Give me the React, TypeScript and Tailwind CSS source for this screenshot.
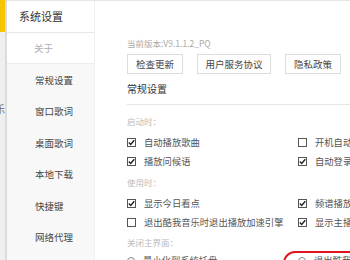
import React from 'react';

const FONT = "font-['Microsoft_YaHei','Noto_Sans_CJK_SC',sans-serif]";

const Check: React.FC<{ on?: boolean }> = ({ on }) => (
  <span className="w-[9px] h-[9px] border border-[#555] bg-white flex items-center justify-center shrink-0">
    {on && (
      <svg width="7" height="7" viewBox="0 0 7 7">
        <path d="M0.8 3.6 L2.7 5.5 L6.3 1.2" fill="none" stroke="#222" strokeWidth="1.4" />
      </svg>
    )}
  </span>
);

const Radio: React.FC = () => (
  <span className="w-[8px] h-[8px] rounded-full border border-[#888] bg-white shrink-0" />
);

const Option: React.FC<{ on?: boolean; label: string; radio?: boolean }> = ({ on, label, radio }) => (
  <div className="flex items-center gap-[8px] h-[19px] whitespace-nowrap">
    {radio ? <Radio /> : <Check on={on} />}
    <span className="text-[9.3px] text-[#555]">{label}</span>
  </div>
);

const SECTIONS = ['常规设置', '窗口歌词', '桌面歌词', '本地下载', '快捷键', '网络代理'];

const App: React.FC = () => {
  return (
    <div className={`w-[350px] h-[260px] overflow-hidden flex bg-white relative ${FONT}`}>
      {/* app behind the dialog */}
      <div className="w-[7px] flex flex-col shrink-0 border-r-2 border-[#dcdcdc] overflow-hidden">
        <div className="h-[32px] bg-[#f6c400]" />
        <div className="flex-1 bg-[#efefef] pt-[72px]">
          <span className="block -ml-[5px] text-[10px] text-[#666] leading-none">乐</span>
        </div>
      </div>

      <div className="flex-1 flex border-t border-[#e6e6e6]">
        {/* sidebar */}
        <div className="w-[88px] shrink-0 bg-[#f8f8f8] flex flex-col border-r border-[#f0f0f0]">
          <div className="h-[32px] bg-white flex items-center pl-[12px] border-b border-[#e8e8e8]">
            <span className="text-[11px] text-[#333]">系统设置</span>
          </div>
          <div className="h-[31px] bg-white flex items-center pl-[27px] border-b border-[#ececec]">
            <span className="text-[9.5px] text-[#b0b0b0]">关于</span>
          </div>
          {SECTIONS.map(s => (
            <div key={s} className="h-[31.5px] flex items-center pl-[28px]">
              <span className="text-[9.5px] text-[#444]">{s}</span>
            </div>
          ))}
        </div>

        {/* content */}
        <div className="flex-1 pl-[32px] pt-[36px]">
          <div className="text-[8.5px] leading-[12px] text-[#aaa]">当前版本:V9.1.1.2_PQ</div>
          <div className="flex gap-[14px] mt-[5px]">
            <button className="w-[56px] h-[20px] border border-[#ddd] text-[9.5px] text-[#444]">检查更新</button>
            <button className="w-[74px] h-[20px] border border-[#ddd] text-[9.5px] text-[#444]">用户服务协议</button>
            <button className="w-[56px] h-[20px] border border-[#ddd] text-[9.5px] text-[#444]">隐私政策</button>
          </div>
          <div className="mt-[8px] pb-[8px] border-b border-[#e6e6e6] text-[10px] leading-[14px] text-[#333]">常规设置</div>

          <div className="mt-[10px] text-[8.5px] leading-[12px] text-[#bbb]">启动时：</div>
          <div className="grid grid-cols-[171px_1fr] mt-[6px]">
            <Option on label="自动播放歌曲" />
            <Option label="开机自动启动" />
            <Option on label="播放问候语" />
            <Option on label="自动登录账号" />
          </div>

          <div className="mt-[5px] text-[8.5px] leading-[12px] text-[#bbb]">使用时：</div>
          <div className="grid grid-cols-[171px_1fr] mt-[6px]">
            <Option on label="显示今日看点" />
            <Option on label="频谱播放效果" />
            <Option label="退出酷我音乐时退出播放加速引擎" />
            <Option on label="显示主播动态" />
          </div>

          <div className="mt-[4px] text-[8.5px] leading-[12px] text-[#bbb]">关闭主界面：</div>
          <div className="grid grid-cols-[171px_1fr] mt-[3px]">
            <Option radio label="最小化到系统托盘" />
            <Option radio label="退出酷我音乐" />
          </div>
        </div>
      </div>

      {/* red annotation */}
      <div className="absolute left-[283px] top-[251px] w-[90px] h-[30px] border-[2.5px] border-[#e0141e] rounded-[12px]" />
    </div>
  );
};

export default App;
